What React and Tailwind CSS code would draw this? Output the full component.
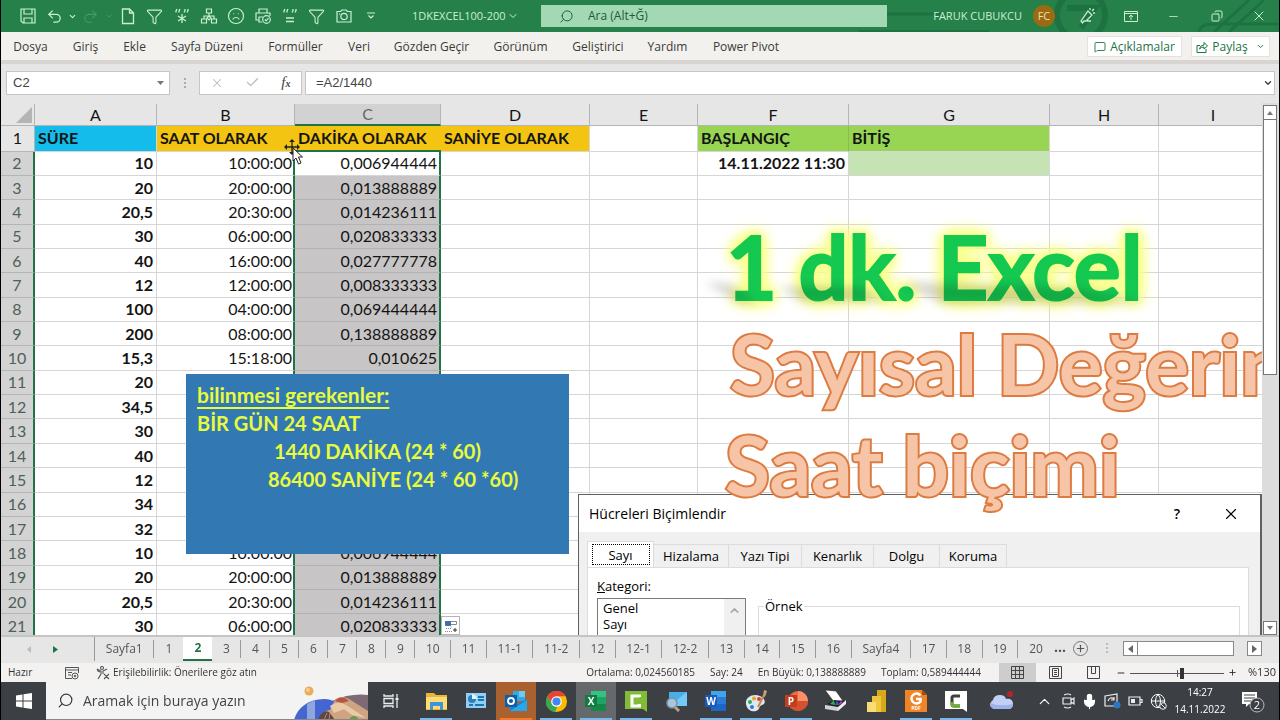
import React from "react";
import {
  Undo2, Redo2, Filter, Frown, ChevronDown, Search,
  Minus, X, Check, MessageSquare, Plus, ChevronUp, Mic, Globe, Copy,
} from "lucide-react";

const rowsA = ["10", "20", "20,5", "30", "40", "12", "100", "200", "15,3", "20", "34,5", "30", "40", "12", "34", "32", "10", "20", "20,5", "30"];
const rowsB = ["10:00:00", "20:00:00", "20:30:00", "06:00:00", "16:00:00", "12:00:00", "04:00:00", "08:00:00", "15:18:00", "", "", "", "", "", "", "", "10:00:00", "20:00:00", "20:30:00", "06:00:00"];
const rowsC = ["0,006944444", "0,013888889", "0,014236111", "0,020833333", "0,027777778", "0,008333333", "0,069444444", "0,138888889", "0,010625", "", "", "", "", "", "", "", "0,006944444", "0,013888889", "0,014236111", "0,020833333"];

const ribbonTabs = [
  ["Dosya", "w-[59px]"], ["Giriş", "w-[51px]"], ["Ekle", "w-[47px]"], ["Sayfa Düzeni", "w-[98px]"],
  ["Formüller", "w-[79px]"], ["Veri", "w-[48px]"], ["Gözden Geçir", "w-[97px]"], ["Görünüm", "w-[81px]"],
  ["Geliştirici", "w-[74px]"], ["Yardım", "w-[65px]"], ["Power Pivot", "w-[92px]"],
];

const sheetTabs = ["Sayfa1", "1", "2", "3", "4", "5", "6", "7", "8", "9", "10", "11", "11-1", "11-2", "12", "12-1", "12-2", "13", "14", "15", "16", "Sayfa4", "17", "18", "19", "20"];
const tabWidth = { 1: "w-[29px] shrink-0", 2: "w-[36px]", 4: "w-[47px]", 6: "w-[60px]" };

function QuickButton({ label, children, className = "w-[27px]" }) {
  return (
    <button aria-label={label} className={`flex h-8 shrink-0 items-center justify-center ${className}`}>
      {children}
    </button>
  );
}

function Quotes({ children }) {
  return (
    <svg width="18" height="18" viewBox="0 0 18 18" fill="none" stroke="currentColor" strokeWidth="1.3">
      <path d="M4 2 3 4v1.500M7 2 6 4v1.500M11 5.500l1-2V2M14 5.500l1-2V2" />
      {children}
    </svg>
  );
}

function TitleBar() {
  return (
    <header className="relative flex h-8 shrink-0 items-center overflow-hidden bg-[#25804a] text-[#c9f0d3]">
      <svg className="absolute right-0 top-0" width="420" height="32" fill="none" stroke="#1e7242" strokeWidth="6">
        <path d="M0 14h90M340 32c2-8 8-8 20-8h60M355 32 390 0M370 32 405 0" strokeWidth="3" />
        <circle cx="222" cy="15" r="24" />
        <path d="M208 8h28l-14 20" />
        <path d="M0 31h130" strokeWidth="2" />
      </svg>
      <div className="relative flex w-[540px] shrink-0 items-center pl-[13px]">
        <QuickButton label="Kaydet">
          <svg width="16" height="16" viewBox="0 0 16 16" fill="none" stroke="currentColor" strokeWidth="1.200"><path d="M1 1h14v14H3l-2-2zM4 1v5h8V1M4 15v-5h8v5" /></svg>
        </QuickButton>
        <QuickButton label="Geri Al"><Undo2 size={17} strokeWidth={1.8} /></QuickButton>
        <QuickButton label="Geri Al seçenekleri" className="w-[9px]"><ChevronDown size={9} strokeWidth={3} /></QuickButton>
        <QuickButton label="Yinele"><Redo2 className="text-[#4a9a68]" size={17} strokeWidth={1.5} /></QuickButton>
        <QuickButton label="Yinele seçenekleri" className="w-[10px]"><ChevronDown className="text-[#4a9a68]" size={8} strokeWidth={3} /></QuickButton>
        <QuickButton label="Yeni">
          <svg width="14" height="18" viewBox="0 0 14 18" fill="none" stroke="currentColor" strokeWidth="1.3"><path d="M1.500 2h7l4 4v10.500h-11zM8.500 2v4h4" /></svg>
        </QuickButton>
        <QuickButton label="Filtre"><Filter size={17} strokeWidth={1.5} /></QuickButton>
        <QuickButton label="Özel yapıştır"><Quotes><path d="M9 7v9M5 9l8 5M13 9l-8 5" /></Quotes></QuickButton>
        <QuickButton label="Hiyerarşi">
          <svg width="18" height="18" viewBox="0 0 18 18" fill="none" stroke="currentColor" strokeWidth="1.2"><path d="M6.500 2h5v4h-5zM9 6v3M4 12V9h10v3M9 9l-2 2 2 2 2-2zM1.500 12h5v4h-5zM11.500 12h5v4h-5z" /></svg>
        </QuickButton>
        <QuickButton label="Üzgün yüz"><Frown size={18} strokeWidth={1.6} /></QuickButton>
        <QuickButton label="Yazdır">
          <svg width="18" height="18" viewBox="0 0 18 18" fill="none" stroke="currentColor" strokeWidth="1.2"><path d="M5 6V2h8v4M5 13H2V6h14v3M8 15H5v-5h4" /><circle cx="12.500" cy="12.500" r="3.800" /><path d="m10.800 12.500 1.300 1.300 2.400-2.600" /></svg>
        </QuickButton>
        <QuickButton label="Formül"><Quotes><path d="M5 11h8M5 14.500h8" /></Quotes></QuickButton>
        <QuickButton label="Filtrele"><Filter size={17} strokeWidth={1.5} /></QuickButton>
        <QuickButton label="Kamera">
          <svg width="16" height="14" viewBox="0 0 16 14" fill="none" stroke="currentColor" strokeWidth="1.200"><path d="M1 2.500h3.500L6 1h4l1.500 1.500H15V13H1z" /><circle cx="8" cy="7.500" r="3.200" /><path d="M3 5h1" /></svg>
        </QuickButton>
        <QuickButton label="Araç çubuğunu özelleştir">
          <svg width="8" height="8" viewBox="0 0 8 8" fill="none" stroke="currentColor" strokeWidth="1.2"><path d="M0 1h8M1.500 3.500 4 6l2.500-2.500" /></svg>
        </QuickButton>
        <button className="ml-[28px] flex items-center gap-px whitespace-nowrap text-[11px]">1DKEXCEL100-200 <ChevronDown size={12} /></button>
      </div>
      <label className="relative flex h-[22px] min-w-0 shrink grow-0 basis-[346px] items-center bg-[#a2d8b3] text-[#1e5c37]">
        <Search className="ml-[18px] shrink-0 -scale-x-100" size={15} strokeWidth={1.5} />
        <input aria-label="Ara" placeholder="Ara (Alt+Ğ)" className="ml-[14px] min-w-0 flex-1 bg-transparent text-xs outline-none placeholder:text-[#1e5c37]" />
      </label>
      <div className="relative ml-auto flex shrink-0 items-center">
        <span className="text-[11px]">FARUK CUBUKCU</span>
        <span className="mx-[11px] flex size-[22px] items-center justify-center rounded-full bg-[#9a6b12] text-[11px] text-[#f3dfae]">FC</span>
        <QuickButton label="Kalem" className="w-[43px]">
          <svg width="18" height="18" viewBox="0 0 18 18" fill="none" stroke="currentColor" strokeWidth="1.3"><path d="M2 14 9 4l4 4-6 6H5l-1.500 2zM8 14h4M11 3V1M13 4l2-2M14 6h2" /></svg>
        </QuickButton>
        <QuickButton label="Şerit görünümü" className="w-[43px]">
          <svg width="14" height="11" viewBox="0 0 14 11" fill="none" stroke="currentColor"><path d="M.5.5h13v10H.5zM.5 2.500h13M7 9V4M5 6l2-2 2 2" /></svg>
        </QuickButton>
        <QuickButton label="Simge durumuna küçült" className="w-[43px]"><Minus size={13} strokeWidth={1.500} /></QuickButton>
        <QuickButton label="Önceki boyut" className="w-[43px]"><Copy className="-scale-x-100" size={12} strokeWidth={2} /></QuickButton>
        <QuickButton label="Kapat" className="w-[41px]"><X size={16} strokeWidth={1.500} /></QuickButton>
      </div>
    </header>
  );
}

function Ribbon() {
  return (
    <nav className="flex h-8 shrink-0 items-center border-b-4 border-[#d8d4d1] bg-[#f3f1ee] pt-px text-xs text-[#3b3a39]">
      {ribbonTabs.map(([t, w]) => (
        <button key={t} className={`${w} shrink-0 whitespace-nowrap text-center`}>{t}</button>
      ))}
      <div className="ml-auto flex gap-[9px] pr-[9px] font-medium text-[#217346]">
        <button className="flex h-[21px] w-[95px] items-center justify-center gap-1 border border-[#e4e2e0] bg-white"><MessageSquare size={12} strokeWidth={1.800} />Açıklamalar</button>
        <button className="flex h-[21px] w-[79px] items-center justify-center gap-1 border border-[#e4e2e0] bg-white">
          <svg width="12" height="12" viewBox="0 0 12 12" fill="none" stroke="currentColor"><path d="M4 4.500H1v7h9V8M3.500 8q.5-4 4.500-4V1.500l3.500 3.500L8 8V6Q5 6 3.500 8z" /></svg>
          Paylaş<ChevronDown className="ml-1" size={9} strokeWidth={2.500} />
        </button>
      </div>
    </nav>
  );
}

function FormulaBar() {
  return (
    <div className="flex h-[39px] shrink-0 items-center bg-[#e6e6e6] pb-[2px] pl-[5px] pr-1 font-['Liberation_Sans',sans-serif] text-[13px] text-[#444]">
      <div className="flex h-6 w-[164px] items-center border border-[#c6c6c6] bg-white">
        <input aria-label="Ad kutusu" defaultValue="C2" className="min-w-0 flex-1 bg-transparent pl-[6px] outline-none" />
        <svg className="mr-[5px]" width="7" height="4"><path d="M0 0h7L3.500 4z" fill="#777" /></svg>
      </div>
      <span className="flex w-[29px] flex-col items-center gap-[2px]">
        <i className="size-[2px] bg-[#aaa]" /><i className="size-[2px] bg-[#aaa]" /><i className="size-[2px] bg-[#aaa]" />
      </span>
      <div className="flex h-6 w-[103px] items-center justify-around border border-[#c6c6c6] bg-white text-[#bbb]">
        <button aria-label="İptal"><X size={14} strokeWidth={1.800} /></button>
        <button aria-label="Gir"><Check size={15} strokeWidth={2} /></button>
        <button aria-label="İşlev ekle" className="font-['Liberation_Serif',serif] text-[15px] italic leading-none text-[#444]">f<span className="text-[10px] font-bold">x</span></button>
      </div>
      <div className="ml-[3px] flex h-6 flex-1 items-center border border-[#c6c6c6] bg-white">
        <input aria-label="Formül" defaultValue="=A2/1440" className="min-w-0 flex-1 bg-transparent pl-[10px] outline-none" />
        <ChevronDown className="mr-px" size={10} strokeWidth={3.500} />
      </div>
    </div>
  );
}

const cell = "border-b border-r border-[#d6d6d6] px-[3px] py-0 whitespace-nowrap";

function Sheet() {
  return (
    <table className="h-[536px] w-[calc(100%+6px)] table-fixed border-separate border-spacing-0 border-t border-[#e6e6e6] bg-white font-['Lato',sans-serif] text-base leading-5 text-[#141414]">
      <colgroup>
        <col className="w-[34px]" /><col className="w-[122px]" /><col className="w-[138px]" /><col className="w-[146px]" />
        <col className="w-[149px]" /><col className="w-[108px]" /><col className="w-[151px]" /><col className="w-[201px]" />
        <col className="w-[109px]" /><col />
      </colgroup>
      <thead>
        <tr className="bg-[#e6e6e6]">
          <th aria-label="Tümünü seç" className="border-b border-r border-[#b5b5b5] p-0">
            <svg className="ml-auto mr-[2px]" width="16" height="16"><path d="M16 0v16H0z" fill="#b4b4b4" /></svg>
          </th>
          {["A", "B", "C", "D", "E", "F", "G", "H", "I"].map((c) => (
            <th key={c} scope="col" className={c === "C" ? "border-b-2 border-r border-b-[#217346] border-r-[#b5b5b5] bg-[#d2d2d2] p-0 font-normal text-[#5b6b62]" : "border-b border-r border-[#b5b5b5] p-0 font-normal"}>{c}</th>
          ))}
        </tr>
      </thead>
      <tbody>
        <tr className="text-left font-bold">
          <th scope="row" className="border-b border-r border-[#b5b5b5] bg-[#e6e6e6] p-0 text-center font-normal">1</th>
          <td className={`${cell} bg-[#14bcec]`}>SÜRE</td>
          <td className={`${cell} border-r-[#f3c512] bg-[#f3c512]`}>SAAT OLARAK</td>
          <td className="whitespace-nowrap border-b-2 border-b-[#217346] bg-[#f3c512] px-[3px] py-0">DAKİKA OLARAK</td>
          <td className={`${cell} bg-[#f3c512]`}>SANİYE OLARAK</td>
          <td className={cell} />
          <td className={`${cell} border-r-[#86c04c] bg-[#97d553]`}>BAŞLANGIÇ</td>
          <td className={`${cell} bg-[#97d553]`}>BİTİŞ</td>
          <td className={cell} /><td className={cell} />
        </tr>
        {rowsA.map((a, i) => (
          <tr key={i} className="text-right">
            <th scope="row" className="border-b border-r-2 border-b-[#b5b5b5] border-r-[#217346] bg-[#d3d3d3] p-0 text-center font-normal text-[#4e6156]">{i + 2}</th>
            <td className={`${cell} font-bold`}>{a}</td>
            <td className="whitespace-nowrap border-b border-r-2 border-b-[#d6d6d6] border-r-[#217346] py-0 pr-px">{rowsB[i]}</td>
            <td className={i === 0 ? "border-b border-r-2 border-b-[#d6d6d6] border-r-[#217346] py-0 pr-[2px]" : "border-b border-r-2 border-b-[#b2b2b2] border-r-[#217346] bg-[#c7c5c5] py-0 pr-[2px]"}>{rowsC[i]}</td>
            <td className={cell} /><td className={cell} />
            <td className={`${cell} font-bold`}>{i === 0 ? "14.11.2022 11:30" : ""}</td>
            <td className={i === 0 ? `${cell} bg-[#c6e4b3]` : cell} />
            <td className={cell} /><td className={cell} />
          </tr>
        ))}
      </tbody>
    </table>
  );
}

function FormatDialog() {
  const tabs = [["Hizalama", "w-[75px]"], ["Yazı Tipi", "w-[73px]"], ["Kenarlık", "w-[72px]"], ["Dolgu", "w-[66px]"], ["Koruma", "w-[67px]"]];
  return (
    <section role="dialog" aria-label="Hücreleri Biçimlendir" className="absolute left-[577px] right-0 top-[391px] flex h-[160px] flex-col border border-r-2 border-[#606060] bg-[#f0f0f0] text-[13px] leading-4 text-black">
      <div className="flex h-[37px] shrink-0 items-center bg-white pl-[10px] pr-5">
        <h2 className="flex-1 text-sm">Hücreleri Biçimlendir</h2>
        <button aria-label="Yardım" className="mr-[42px] text-sm font-semibold">?</button>
        <button aria-label="Kapat"><X size={18} strokeWidth={1.500} /></button>
      </div>
      <div className="flex h-[35px] shrink-0 items-end pl-2">
        <button className="z-10 flex h-[26px] w-[67px] items-center justify-center border border-b-0 border-[#dcdcdc] bg-white p-px">
          <span className="flex h-[21px] w-[58px] items-center justify-center border border-dotted border-black">Sayı</span>
        </button>
        {tabs.map(([t, w]) => (
          <button key={t} className={`${w} h-[23px] whitespace-nowrap border-r border-t border-[#dcdcdc]`}>{t}</button>
        ))}
      </div>
      <div className="ml-2 mr-[11px] flex flex-1 gap-3 border border-[#dcdcdc] bg-white pl-[9px] pr-2 pt-[10px]">
        <div className="w-[149px] shrink-0">
          <label id="kategori" className="block"><u>K</u>ategori:</label>
          <ul role="listbox" aria-labelledby="kategori" className="relative mt-[4px] h-[80px] border border-[#7a7a7a] pl-[5px] pt-px">
            <li role="option" aria-selected="false">Genel</li>
            <li role="option" aria-selected="false">Sayı</li>
            <li className="absolute inset-y-0 right-0 w-[21px] bg-[#f0f0f0] pl-1 pt-[5px]" role="presentation"><ChevronUp className="text-[#aaa]" size={13} strokeWidth={3} /></li>
          </ul>
        </div>
        <fieldset className="mt-[20px] h-[80px] flex-1 border border-[#dcdcdc] pl-[5px]"><legend className="px-px">Örnek</legend></fieldset>
      </div>
    </section>
  );
}

function Overlays() {
  return (
    <>
      <div className="absolute left-[185px] top-[271px] h-[180px] w-[383px] whitespace-pre bg-[#3278b3] pl-[11px] pt-[7px] font-['Lato',sans-serif] text-xl font-bold leading-7 text-[#e8fb3c]">
        <p className="text-[21px] leading-7 underline decoration-2 underline-offset-4">bilinmesi gerekenler:</p>
        <p>BİR GÜN 24 SAAT</p>
        <p className="pl-[77px]">1440 DAKİKA (24 * 60)</p>
        <p className="pl-[71px]">86400 SANİYE (24 * 60 *60)</p>
      </div>
      <button aria-label="Otomatik doldurma seçenekleri" className="absolute left-[440px] top-[513px] flex size-[19px] items-center justify-center border border-[#b5b5b5] bg-white">
        <svg width="14" height="14" fill="none" stroke="#888"><path d="M1.500 2.500h11v3h-11z" /><path d="M1.500 2.500h5v4h-5z" fill="#3d6db5" stroke="#3d6db5" /><path d="M2 9.500h5v-3M1 12.500h8" strokeDasharray="1 1" /><path d="M9 11h4M11 9v4" stroke="#333" /></svg>
      </button>
      <FormatDialog />
      <div className="absolute left-[725px] top-[112px] whitespace-nowrap font-['Lato',sans-serif] text-[88px] font-bold leading-[102px] text-[#14c850] [-webkit-text-stroke:2px_#14c850] [text-shadow:0_0_8px_#f8ff8c,0_0_12px_#f8ff8c,0_0_12px_#f8ff8c,0_0_16px_#f8ff8c,0_0_16px_#f8ff8c,0_0_20px_#f8ff8c]">1 dk. Excel</div>
      <svg className="absolute left-[690px] top-[160px] mix-blend-multiply" width="480" height="64">
        <defs><filter id="soft" x="-20%" y="-100%" width="140%" height="300%"><feGaussianBlur stdDeviation="5" /></filter></defs>
        <g fill="#777" opacity=".3" filter="url(#soft)"><path d="M14 20h22l30 20H50zM88 24h80l30 14H110zM212 20h24l150 6 70 14H250z" /></g>
      </svg>
      <div className="absolute left-[725px] top-[112px] whitespace-nowrap font-['Lato',sans-serif] text-[88px] font-bold leading-[102px] text-[#14c850] [-webkit-text-stroke:2px_#14c850]" aria-hidden="true" />
      <div className="absolute left-[729px] top-[209px] whitespace-nowrap font-['Lato',sans-serif] text-[82px] font-bold leading-[102px] text-[#f6c5a8] [-webkit-text-stroke:4px_#dd7b40] [paint-order:stroke_fill]">Sayısal Değerin</div>
      <div className="absolute left-[724px] top-[310px] whitespace-nowrap font-['Lato',sans-serif] text-[82px] font-bold leading-[102px] text-[#f6c5a8] [-webkit-text-stroke:4px_#dd7b40] [paint-order:stroke_fill]">Saat biçimi</div>
      <svg className="absolute left-[282px] top-[34px]" width="24" height="28" viewBox="0 0 24 28">
        <path d="M9 4v12M3 10h12" stroke="#222" strokeWidth="1.300" />
        <path d="m9 2 3 3H6zM9 18l3-3H6zM1 10l3-3v6zM17 10l-3-3v6z" fill="#222" />
        <path d="M10 11v13l3-3 2.500 6 2.500-1-2.500-6h4z" fill="#fff" stroke="#222" />
      </svg>
    </>
  );
}

function VerticalScroll() {
  return (
    <div className="flex w-[17px] shrink-0 flex-col bg-[#dcdcdc] pl-px pr-[2px] pt-[2px]">
      <button aria-label="Yukarı" className="flex h-[15px] items-center justify-center border border-[#777] bg-white"><svg width="6" height="4"><path d="M0 4h6L3 0z" fill="#777" /></svg></button>
      <div className="-mt-px h-[256px] border border-[#777] bg-white" />
      <button aria-label="Aşağı" className="mt-auto flex h-[14px] items-center justify-center border border-[#777] bg-white"><svg width="6" height="4"><path d="M0 0h6L3 4z" fill="#777" /></svg></button>
    </div>
  );
}

function SheetTabs() {
  return (
    <div className="flex h-[28px] shrink-0 items-start border-t-2 border-[#c4c4c4] bg-[#e6e6e6] text-xs text-[#555]">
      <div className="flex h-6 w-[94px] shrink-0 items-center border-r border-[#999] pl-[25px]">
        <button aria-label="Önceki sayfalar"><svg width="5" height="7"><path d="M5 0v7L1 3.500z" fill="#bbb" /></svg></button>
        <button aria-label="Sonraki sayfalar" className="ml-[22px]"><svg width="5" height="7"><path d="M0 0v7l5-3.500z" fill="#217346" /></svg></button>
      </div>
      <div className="flex min-w-0 shrink grow-0 basis-[959px]">
        {sheetTabs.map((t) => (
          <button key={t} className={`${tabWidth[t.length]} whitespace-nowrap ${t === "2" ? "h-6 border-b-2 border-[#217346] bg-white font-bold text-[#217346]" : t === "1" || t === "20" ? "my-[3px] h-[18px]" : "my-[3px] h-[18px] border-r border-[#999]"}`}>{t}</button>
        ))}
      </div>
      <span className="w-[10px] shrink-0 text-sm font-bold leading-5">...</span>
      <button aria-label="Yeni sayfa" className="ml-[9px] mt-[4px] flex size-[15px] shrink-0 items-center justify-center rounded-full border border-[#777]"><Plus size={11} strokeWidth={2.500} /></button>
      <span className="ml-[18px] mt-[6px] flex shrink-0 flex-col gap-[2px]">
        <i className="size-[2px] bg-[#bbb]" /><i className="size-[2px] bg-[#bbb]" /><i className="size-[2px] bg-[#bbb]" />
      </span>
      <div className="ml-auto mt-[4px] flex h-[15px] shrink-0 pr-[17px]">
        <button aria-label="Sola" className="flex w-[15px] items-center justify-center border border-[#888] bg-white"><svg width="5" height="8"><path d="M5 0v8L0 4z" fill="#666" /></svg></button>
        <div className="-ml-px w-[97px] border border-[#888] bg-white" />
        <button aria-label="Sağa" className="ml-[13px] flex w-[15px] items-center justify-center border border-[#888] bg-white"><svg width="5" height="8"><path d="M0 0v8l5-4z" fill="#666" /></svg></button>
      </div>
    </div>
  );
}

function StatusBar() {
  return (
    <div className="flex h-[19px] shrink-0 items-center whitespace-nowrap bg-[#f3f2f1] text-[10px] text-[#333]">
      <span className="w-[64px] pl-[7px]">Hazır</span>
      <svg width="14" height="14" viewBox="0 0 14 14" fill="none" stroke="#555"><path d="M7 12.500H.5v-11h13V7M.5 4h13M3 6.500h4M3 9h3" /><circle cx="10" cy="10" r="3" /><circle cx="10" cy="10" r=".8" fill="#555" /></svg>
      <svg className="ml-[17px]" width="14" height="14" viewBox="0 0 14 14" fill="none" stroke="#555" strokeWidth="1.100"><circle cx="6" cy="2" r="1.500" /><path d="m1 3 4 2v3l-3 5M11 3 7 5v3M1 3l1 2 2 1M8 8l5 5M13 8l-5 5" /></svg>
      <span className="ml-[3px]">Erişilebilirlik: Önerilere göz atın</span>
      <div className="ml-auto flex gap-[15px] pr-[18px]">
        <span>Ortalama: 0,024560185</span><span>Say: 24</span><span>En Büyük: 0,138888889</span><span>Toplam: 0,589444444</span>
      </div>
      <button aria-label="Normal" className="flex h-full w-[37px] items-center justify-center bg-[#cdcdcd]"><svg width="13" height="13" fill="none" stroke="#444"><path d="M.5.5h12v12H.5zM.5 4.500h12M.5 8.500h12M4.500.5v12M8.500.5v12" /></svg></button>
      <button aria-label="Sayfa düzeni" className="flex w-[38px] justify-center"><svg width="13" height="13" fill="none" stroke="#444"><path d="M.5.5h12v12H.5zM3.500 2.500h6v8h-6zM5 4.500h3M5 6.500h3M5 8.500h3" /></svg></button>
      <button aria-label="Sayfa sonu" className="flex w-[38px] justify-center"><svg width="13" height="13" fill="none" stroke="#444"><path d="M.5.5h12v12M.5 0v12.500h12M4.500.5v7h4v-7" /></svg></button>
      <Minus className="ml-[4px]" size={10} strokeWidth={2.500} />
      <svg className="mx-[4px]" width="94" height="12"><path d="M0 6.500h94" stroke="#555" /><path d="M47.500 3v7" stroke="#555" /><path d="M50 1h4v11h-4z" fill="#333" /></svg>
      <Plus size={9} strokeWidth={2.500} />
      <span className="w-[42px] pl-[11px] text-[11px]">%130</span>
    </div>
  );
}

function Office({ letter, dark, mid, light }) {
  return (
    <svg width="22" height="22" viewBox="0 0 22 22">
      <path d="M6 1h15v20H6z" fill={light} /><path d="M6 7h15v7H6z" fill={mid} /><path d="M6 14h15v7H6z" fill={dark} opacity=".85" />
      <path d="M0 5h12v12H0z" fill={dark} />
      <text x="6" y="15" textAnchor="middle" fontSize="10" fontWeight="700" fill="#fff" fontFamily="Open Sans, sans-serif">{letter}</text>
    </svg>
  );
}

function AppButton({ label, running, className = "", children }) {
  return (
    <button aria-label={label} className={`relative flex h-full w-10 shrink items-center justify-center ${className}`}>
      {children}
      {running && <i className={`absolute inset-x-1 bottom-0 h-[2px] ${running}`} />}
    </button>
  );
}

function Taskbar() {
  const line = "bg-[#76b9ed]";
  return (
    <footer className="flex h-[38px] shrink-0 items-center bg-[#3c4045] text-white">
      <button aria-label="Başlat" className="flex h-full w-[45px] shrink-0 items-center justify-center">
        <svg width="16" height="16" fill="#fff"><path d="M0 2.500 6.500 1.500v6H0zM7.500 1.300 16 0v7.500H7.500zM0 8.500h6.500v6L0 13.500zM7.500 8.500H16V16l-8.500-1.300z" /></svg>
      </button>
      <label className="relative flex h-full w-[322px] shrink-0 items-center overflow-hidden border-b border-[#888] bg-[#f3f3f3] text-[#333]">
        <Search className="ml-[11px] -scale-x-100" size={17} strokeWidth={1.600} />
        <input aria-label="Arama" placeholder="Aramak için buraya yazın" className="ml-[9px] w-[190px] bg-transparent text-sm outline-none placeholder:text-[#444]" />
        <svg className="absolute right-0 top-0" width="80" height="38" viewBox="0 0 80 38">
          <path d="M44 19q18-8 36-6v25H50z" fill="#7d6a74" />
          <path d="M6 38Q12 18 36 17q16 0 26 21z" fill="#4465d2" /><path d="M19 22l8-4v20h-8z" fill="#8fa6dd" />
          <circle cx="21" cy="9" r="4.500" fill="#e8ad5c" /><circle cx="20" cy="8" r="2" fill="#f5d08c" />
          <path d="M31 38c2-6 6-10 11-10l4-8c2-6 10-6 15-3l19 12v9z" fill="#cfa483" />
          <path d="M42 24q8-6 16-1l20 13-14-3-8-6-10 4z" fill="#ebcaa8" />
          <path d="M47 19q4-5 10-3l4 3-7 2z" fill="#b65440" />
          <path d="M30 38q4-11 11-8l6 8z" fill="#64463f" /><path d="M36 38l3-7M41 38l1-7" stroke="#a98878" />
          <path d="M62 36q4-4 8 0v2h-8z" fill="#6d9a4a" />
        </svg>
      </label>
      <div className="ml-[3px] flex h-full min-w-0 items-center">
        <AppButton label="Görev görünümü"><svg width="16" height="16" fill="none" stroke="#eee" strokeWidth="1.300"><path d="M1 1v2h9V1M1 5.500h9v5H1zM1 15v-2h9v2M14 1v3M14 8v7" /><circle cx="14" cy="6" r="1" fill="#eee" /></svg></AppButton>
        <AppButton label="Dosya Gezgini" running={line} className="ml-[5px]">
          <svg width="21" height="19"><path d="M0 1h8l2 2h11v15H0z" fill="#e9b63c" /><path d="M0 5h21v12H0z" fill="#ffdc72" /><path d="M4 10h13v8h-3v-4H7v4H4z" fill="#3d94d8" /></svg>
        </AppButton>
        <AppButton label="Denetim Masası"><svg width="20" height="16"><path d="M0 0h20v15H0z" fill="#8fd0f5" /><circle cx="6" cy="6" r="4" fill="#2e7fc1" /><path d="M6 6V1a5 5 0 0 1 5 5z" fill="#e8f6ff" /><path d="M12 4h6M12 7h6M3 12h4M9 12h9" stroke="#2373ae" strokeWidth="2" /></svg></AppButton>
        <AppButton label="Outlook" running="bg-[#f7792b]" className="bg-[#a9622f]">
          <svg width="22" height="22"><path d="M8 1h12v10H8z" fill="#32a9e7" /><path d="M14 1h6v6h-6z" fill="#68cdf7" /><path d="M5 9l8 5 9-5v12H5z" fill="#1386d3" /><path d="M5 21 22 10v11z" fill="#28a8ea" /><path d="M0 5h12v12H0z" fill="#0b60ae" /><circle cx="6" cy="11" r="3" fill="none" stroke="#fff" strokeWidth="1.800" /></svg>
        </AppButton>
        <AppButton label="Chrome" running={line}>
          <svg width="23" height="23" viewBox="0 0 48 48"><circle cx="24" cy="24" r="22" fill="#fbbc05" /><path d="M5 13A22 22 0 0 1 43 13H24l-9 16z" fill="#ea4335" /><path d="M5 13 15 30q4 5 11 5l-5 11A22 22 0 0 1 5 13" fill="#34a853" /><circle cx="24" cy="24" r="11" fill="#fff" /><circle cx="24" cy="24" r="8.500" fill="#4285f4" /></svg>
        </AppButton>
        <AppButton label="Excel" running={line} className="bg-[#65696b]"><Office letter="X" dark="#107c41" mid="#21a366" light="#33c481" /></AppButton>
        <AppButton label="Camtasia" running={line}><svg width="22" height="21"><path d="M0 0h22v21l-4-3H0z" fill="#82bc36" /><path d="M14.500 6V5H7v10h7.500v-2" fill="none" stroke="#fff" strokeWidth="3" /></svg></AppButton>
        <AppButton label="Büyüteç"><svg width="22" height="21"><path d="M4 1h18v14H4z" fill="#4aaee9" /><path d="m4 15 18-14v14z" fill="#75c9f7" /><circle cx="7" cy="12" r="5" fill="#a8c7db" stroke="#7894a8" strokeWidth="1.500" /><path d="m10 16 4 4" stroke="#b7a189" strokeWidth="3" /></svg></AppButton>
        <AppButton label="Word" running={line}><Office letter="W" dark="#185abd" mid="#2b7cd3" light="#41a5ee" /></AppButton>
        <AppButton label="Paint" running={line}><svg width="23" height="22"><path d="M1 14C0 7 8 3 15 6c6 3 6 8 2 9-3 1-2 3-4 5-4 3-11 1-12-6" fill="#dce8f2" /><circle cx="5" cy="12" r="2" fill="#32a852" /><circle cx="9" cy="8.500" r="2" fill="#e9a228" /><circle cx="7" cy="17" r="2" fill="#3277d6" /><circle cx="14" cy="9" r="2" fill="#db3e34" /><path d="m13 17 6-12" stroke="#c6884c" strokeWidth="2" /><path d="m18 6 1-6 3 1-2 6z" fill="#c9a276" /></svg></AppButton>
        <AppButton label="PowerPoint" running={line}><svg width="23" height="22"><circle cx="13" cy="11" r="10" fill="#ed6c47" /><path d="M13 1a10 10 0 0 1 10 10H13z" fill="#ff8f6b" /><path d="M3 11h20a10 10 0 0 1-20 0" fill="#d35230" /><path d="M0 5h12v12H0z" fill="#c43e1c" /><text x="6" y="15" textAnchor="middle" fontSize="10" fontWeight="700" fill="#fff" fontFamily="Open Sans, sans-serif">P</text></svg></AppButton>
        <AppButton label="Tarayıcı"><svg width="24" height="24"><path d="m1 1 11 1 7 10-9 1z" fill="#fff" stroke="#222" strokeWidth=".6" /><path d="m3 15 7-4 12 1-8 7z" fill="#222" /><path d="m1 16 13 2v4L1 20z" fill="#d2d2d8" /><path d="m14 18 8-7v4l-8 7z" fill="#eee" /><path d="m6 15 4-4 1 5z" fill="#2fae4e" /><path d="m11 16 2-5 2 5z" fill="#3b57d8" /><path d="m14 16 3-4 2 2z" fill="#b63fc0" /></svg></AppButton>
        <AppButton label="Power BI"><svg width="19" height="22"><path d="M10 0h9v22h-9z" fill="#d9a91c" /><path d="M5 6h9v16H5z" fill="#edc63c" /><path d="M0 12h9v10H0z" fill="#f7dd73" /></svg></AppButton>
        <AppButton label="Foxit PDF" running={line}><svg width="22" height="22"><path d="M0 0h17l5 5v17H0z" fill="#ef8427" /><path d="m17 0 5 5h-5z" fill="#a64e12" /><path d="M15.500 5.500a5 5 0 1 0 0 6V9H11" fill="none" stroke="#fff" strokeWidth="2.500" /><text x="11" y="20" textAnchor="middle" fontSize="5" fontWeight="700" fill="#fff">PDF</text></svg></AppButton>
        <AppButton label="Kaydedici" running={line}><svg width="22" height="21"><path d="M0 0h22v21l-4-3H0z" fill="#fff" /><path d="M15 5H9q-2 0-2 2v6q0 2 2 2h6" fill="none" stroke="#3d4238" strokeWidth="3" /><path d="M7 11v2q0 2 2 2h6" fill="none" stroke="#6fae2e" strokeWidth="3" /></svg></AppButton>
      </div>
      <div className="ml-auto flex h-full shrink-0 items-center">
        <button aria-label="Hava durumu"><svg width="26" height="20"><path d="M5 18a5 5 0 0 1-1-9q1-5 7-5 5 0 6 4c5-1 7 2 7 5q0 5-5 5z" fill="#c3d0f5" /><path d="M5 18a5 5 0 0 1-4-6q10 4 23 1 0 5-5 5z" fill="#9db2ea" /><circle cx="21" cy="3" r="3" fill="#b3262b" /></svg></button>
        <button aria-label="Gizli simgeler" className="ml-[21px]"><ChevronUp size={17} strokeWidth={1.600} /></button>
        <button aria-label="Şimdi toplantı yap" className="ml-[8px]"><svg width="15" height="16" fill="none" stroke="#eee" strokeWidth="1.200"><path d="M2 5h8v6H2zM10 7l3-2v6l-3-2M3 2q4-2 7 0M3 14q4 2 7 0" /></svg></button>
        <button aria-label="Mikrofon" className="ml-[5px]"><Mic size={17} strokeWidth={1.600} fill="#fff" /></button>
        <button aria-label="Ekran" className="ml-[6px]"><svg width="17" height="16" fill="none" stroke="#eee" strokeWidth="1.200"><path d="M1 3l12-2v12H1zM4 8q2-5 6-2M10 4v3H7" /><circle cx="13" cy="12" r="3.500" fill="#2d76c4" stroke="none" /></svg></button>
        <button aria-label="Pil" className="ml-[7px]"><svg width="15" height="10" fill="none" stroke="#eee" strokeWidth="1.200"><path d="M1 1h11v8H1zM12 3.500h2v3h-2" /><path d="M3 3h4v4H3z" fill="#eee" stroke="none" /></svg></button>
        <button aria-label="Ağ" className="relative ml-[7px]"><Globe size={16} strokeWidth={1.500} /><svg className="absolute -bottom-px -right-px" width="8" height="8"><circle cx="4" cy="4" r="3.300" fill="#3c4045" stroke="#eee" /><path d="m2 2 4 4" stroke="#eee" /></svg></button>
        <time className="w-[68px] text-center text-[10px] leading-[17px]">14:27<br />14.11.2022</time>
        <button aria-label="Bildirimler" className="relative ml-[7px] mr-[14px]"><svg width="24" height="24"><path d="M1 3h15v12H8l-3 3v-3H1z" fill="#fff" /><path d="M3 6h11M3 9h11M3 12h7" stroke="#3c4045" /><circle cx="16" cy="16" r="7" fill="#3c4045" stroke="#bbb" /><text x="16" y="20" textAnchor="middle" fontSize="11" fill="#fff">2</text></svg></button>
      </div>
    </footer>
  );
}

export default function App() {
  return (
    <div className="flex h-screen flex-col overflow-hidden border-x border-black font-['Open_Sans',sans-serif]">
      <TitleBar />
      <Ribbon />
      <FormulaBar />
      <main className="flex min-h-0 flex-1">
        <div className="relative min-w-0 flex-1 overflow-hidden bg-white">
          <Sheet />
          <Overlays />
        </div>
        <VerticalScroll />
      </main>
      <SheetTabs />
      <StatusBar />
      <Taskbar />
    </div>
  );
}
